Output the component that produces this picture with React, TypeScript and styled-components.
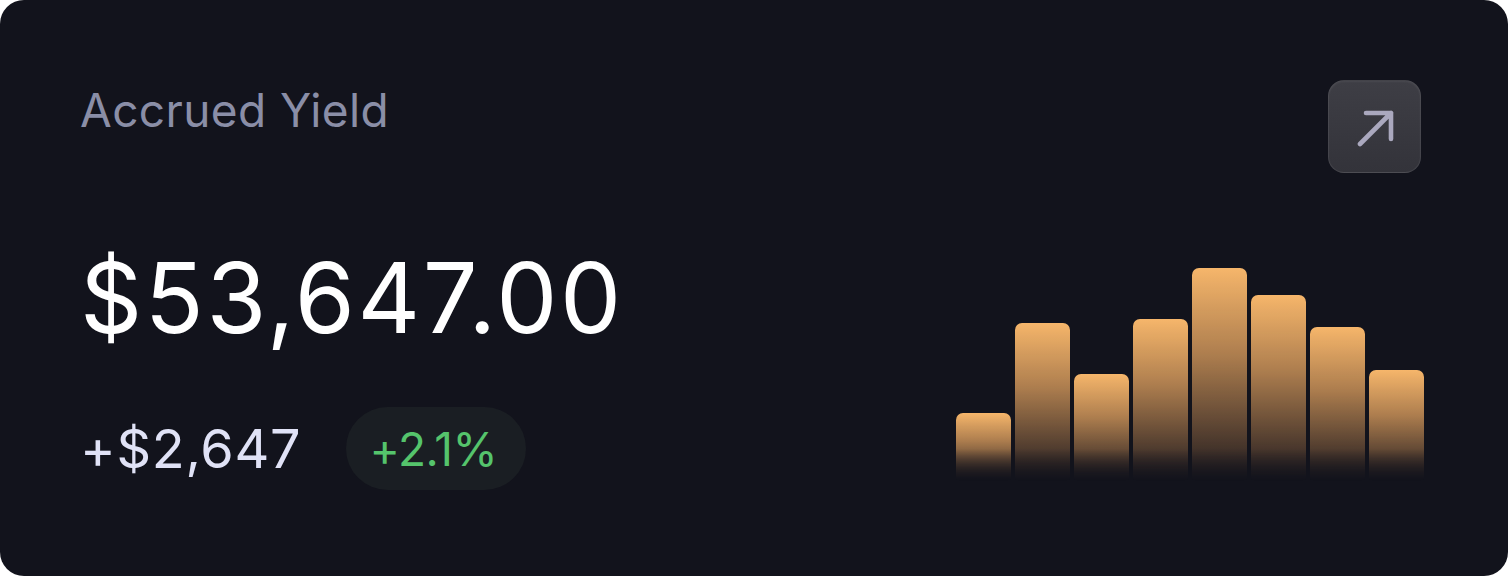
import styled, { createGlobalStyle } from "styled-components";

const GlobalStyle = createGlobalStyle`
  html, body {
    margin: 0;
    padding: 0;
    background: #ffffff;
  }
  body {
    font-family: Inter, "Noto Sans", sans-serif;
  }
`;

const barHeights = [68, 158, 107, 162, 213, 186, 154, 111];

export default function App() {
  return (
    <>
      <GlobalStyle />
      <Card>
        <LeftColumn>
          <Title>Accrued Yield</Title>
          <Amount>$53,647.00</Amount>
          <ChangeRow>
            <ChangeValue>+$2,647</ChangeValue>
            <Badge>+2.1%</Badge>
          </ChangeRow>
        </LeftColumn>

        <RightColumn>
          <IconButton aria-label="Open">
            <svg width="40" height="40" viewBox="0 0 40 40" fill="none">
              <path
                d="M5 37 L36 6 M11 6 H36 V32"
                stroke="#aaa8be"
                strokeWidth="4.6"
                strokeLinecap="round"
                strokeLinejoin="round"
              />
            </svg>
          </IconButton>

          <Chart>
            {barHeights.map((h, index) => (
              <Bar key={index} style={{ height: h }} />
            ))}
          </Chart>
        </RightColumn>
      </Card>
    </>
  );
}

const Card = styled.div`
  box-sizing: border-box;
  width: 1508px;
  height: 576px;
  border-radius: 24px;
  background: #12131c;
  padding: 80px 84px 87px 80px;
  display: flex;
  justify-content: space-between;
  overflow: hidden;
`;

const LeftColumn = styled.div`
  display: flex;
  flex-direction: column;
  align-items: flex-start;
`;

const Title = styled.div`
  margin-top: 7px;
  font-size: 46px;
  line-height: 1;
  font-weight: 400;
  color: #8a8ea7;
  letter-spacing: 0.4px;
`;

const Amount = styled.div`
  margin-top: 116px;
  font-size: 97px;
  line-height: 1;
  font-weight: 400;
  color: #ffffff;
  letter-spacing: 2.6px;
`;

const ChangeRow = styled.div`
  margin-top: 61px;
  display: flex;
  align-items: center;
  column-gap: 45px;
`;

const ChangeValue = styled.div`
  font-size: 54px;
  line-height: 1;
  color: #e0e2f6;
  letter-spacing: 0.7px;
`;

const Badge = styled.div`
  box-sizing: border-box;
  height: 83px;
  width: 180px;
  padding-right: 6px;
  border-radius: 42px;
  background: #1a1e23;
  color: #55c46c;
  font-size: 46px;
  line-height: 1;
  display: flex;
  align-items: center;
  justify-content: center;
  letter-spacing: -0.5px;
`;

const RightColumn = styled.div`
  display: flex;
  flex-direction: column;
  align-items: flex-end;
  justify-content: space-between;
`;

const IconButton = styled.button`
  box-sizing: border-box;
  width: 93px;
  height: 93px;
  margin-right: 3px;
  border-radius: 16px;
  border: 1.5px solid rgba(255, 255, 255, 0.08);
  background: linear-gradient(180deg, #3e3e45 0%, #33333a 100%);
  box-shadow: inset 0 1px 2px rgba(255, 255, 255, 0.06);
  display: flex;
  align-items: center;
  justify-content: center;
  padding: 0;
  cursor: pointer;
`;

const Chart = styled.div`
  display: flex;
  align-items: flex-end;
  column-gap: 4px;
  height: 213px;
  margin-bottom: 8px;
  -webkit-mask-image: linear-gradient(to top, transparent 0, #000 32px);
  mask-image: linear-gradient(to top, transparent 0, #000 32px);
`;

const Bar = styled.div`
  width: 55px;
  border-radius: 7px 7px 4px 4px;
  background: linear-gradient(
    180deg,
    #f6b66b 0%,
    rgba(214, 154, 92, 0.8) 40%,
    rgba(160, 112, 70, 0.35) 85%,
    rgba(120, 85, 55, 0.15) 100%
  );
`;
